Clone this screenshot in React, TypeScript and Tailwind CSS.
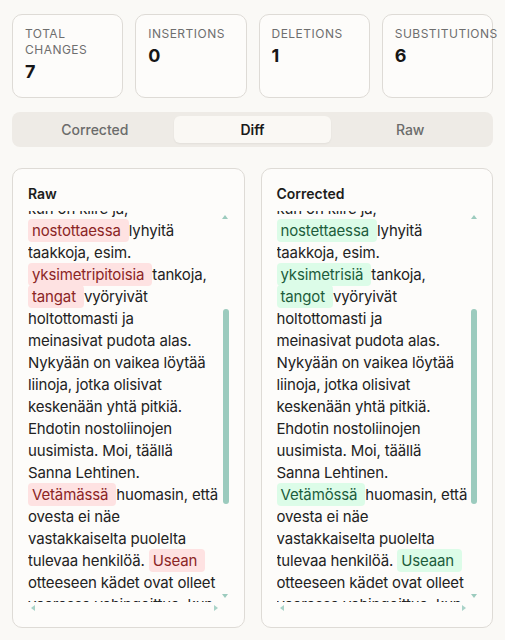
import React, { useLayoutEffect, useRef } from "react";

type Seg = [string, boolean?];
type Line = Seg[];

const before: Line[] = [
  [["Hei, olen Matti Virtanen ja"]],
  [["työskentelen varastossa."]],
  [["Huomasin eilen, että"]],
  [["nosturin nostoliinat ovat"]],
  [["kuluneet ja osittain"]],
  [["rispaantuneet. Niitä on"]],
  [["vaikea käyttää, etenkin"]],
  [["kun on kiire ja,"]],
];

const after: Line[] = [
  [["ovi on avattu toiselta"]],
  [["puolelta yllättäen."]],
  [["Ehdotan, että oveen"]],
  [["asennetaan ikkuna, jotta"]],
  [["vastaantulijat näkisivät"]],
  [["toisensa ajoissa."]],
];

const rawLines: Line[] = [
  ...before,
  [["nostottaessa ", true], ["lyhyitä"]],
  [["taakkoja, esim."]],
  [["yksimetripitoisia ", true], ["tankoja,"]],
  [["tangat ", true], ["vyöryivät"]],
  [["holtottomasti ja"]],
  [["meinasivat pudota alas."]],
  [["Nykyään on vaikea löytää"]],
  [["liinoja, jotka olisivat"]],
  [["keskenään yhtä pitkiä."]],
  [["Ehdotin nostoliinojen"]],
  [["uusimista. Moi, täällä"]],
  [["Sanna Lehtinen."]],
  [["Vetämässä ", true], ["huomasin, että"]],
  [["ovesta ei näe"]],
  [["vastakkaiselta puolelta"]],
  [["tulevaa henkilöä. "], ["Usean ", true]],
  [["otteeseen kädet ovat olleet"]],
  [["vaarassa vahingoittua, kun"]],
  ...after,
];

const corLines: Line[] = [
  ...before,
  [["nostettaessa ", true], ["lyhyitä"]],
  [["taakkoja, esim."]],
  [["yksimetrisiä ", true], ["tankoja,"]],
  [["tangot ", true], ["vyöryivät"]],
  [["holtottomasti ja"]],
  [["meinasivat pudota alas."]],
  [["Nykyään on vaikea löytää"]],
  [["liinoja, jotka olisivat"]],
  [["keskenään yhtä pitkiä."]],
  [["Ehdotin nostoliinojen"]],
  [["uusimista. Moi, täällä"]],
  [["Sanna Lehtinen."]],
  [["Vetämössä ", true], ["huomasin, että"]],
  [["ovesta ei näe"]],
  [["vastakkaiselta puolelta"]],
  [["tulevaa henkilöä. "], ["Useaan ", true]],
  [["otteeseen kädet ovat olleet"]],
  [["vaarassa vahingoittua, kun"]],
  ...after,
];

function Panel({ title, lines, kind }: { title: string; lines: Line[]; kind: "raw" | "cor" }) {
  const ref = useRef<HTMLDivElement>(null);
  useLayoutEffect(() => {
    if (ref.current) ref.current.scrollTop = before.length * 22 - 9;
  }, []);
  const hlCls =
    kind === "raw"
      ? "bg-[#fee2e2] text-[#8b2525] rounded px-1 py-[2px]"
      : "bg-[#dcfce8] text-[#1d5c3c] rounded px-1 py-[2px]";
  return (
    <div className="flex-1 min-w-0 rounded-[10px] border border-[#dedbd6] bg-[#fdfcfa] pl-[15px] pr-[14px] pt-[15px] pb-[14px] flex flex-col">
      <div className="text-sm leading-5 font-semibold text-[#1c1c1c] mb-[7px]">{title}</div>
      <div className="h-[402px] flex flex-col">
        <div className="flex-1 min-h-0 flex">
          <div
            ref={ref}
            className="flex-1 min-w-0 overflow-hidden text-[15px] leading-[22px] tracking-[-0.01em] text-[#222222]"
          >
            {lines.map((ln, i) => (
              <div key={i} className="whitespace-pre h-[22px]">
                {ln.map((s, j) =>
                  s[1] ? (
                    <span key={j} className={hlCls}>
                      {s[0]}
                    </span>
                  ) : (
                    <span key={j}>{s[0]}</span>
                  )
                )}
              </div>
            ))}
          </div>
          <div className="w-[11px] flex flex-col items-end pr-px">
            <div className="h-[12px] w-[7px] flex items-center justify-center">
              <div className="w-0 h-0 border-l-[3.5px] border-r-[3.5px] border-b-[4px] border-l-transparent border-r-transparent border-b-[#9ccbbe]" />
            </div>
            <div className="mt-[86px] h-[195px] w-[6px] rounded-full bg-[#9ccbbe]" />
            <div className="flex-1" />
            <div className="h-[12px] w-[7px] flex items-center justify-center">
              <div className="w-0 h-0 border-l-[3.5px] border-r-[3.5px] border-t-[4px] border-l-transparent border-r-transparent border-t-[#9ccbbe]" />
            </div>
          </div>
        </div>
        <div className="h-[11px] flex items-center">
          <div className="flex-1 flex items-center justify-between pl-[3px] pr-px">
            <div className="w-0 h-0 border-t-[3.5px] border-b-[3.5px] border-r-[4px] border-t-transparent border-b-transparent border-r-[#a9d3c8]" />
            <div className="w-0 h-0 border-t-[3.5px] border-b-[3.5px] border-l-[4px] border-t-transparent border-b-transparent border-l-[#a9d3c8]" />
          </div>
          <div className="w-[11px]" />
        </div>
      </div>
    </div>
  );
}

function Stat({ label, value, nowrap }: { label: string; value: string; nowrap?: boolean }) {
  return (
    <div className="rounded-[10px] border border-[#dedbd6] bg-[#fdfcfa] px-3 py-[11px] min-w-0">
      <div
        className={
          "text-xs leading-4 uppercase tracking-[0.04em] text-[#6e6e6e] " +
          (nowrap ? "whitespace-nowrap" : "whitespace-normal")
        }
      >
        {label}
      </div>
      <div className="text-lg leading-7 font-bold text-[#161616]">{value}</div>
    </div>
  );
}

export default function App() {
  return (
    <div
      className="min-h-[640px] bg-[#faf9f6] px-3 pt-[14px]"
      style={{ fontFamily: "Inter, 'Noto Sans', sans-serif" }}
    >
      <div className="grid grid-cols-4 gap-3">
        <Stat label="Total changes" value="7" />
        <Stat label="Insertions" value="0" />
        <Stat label="Deletions" value="1" />
        <Stat label="Substitutions" value="6" nowrap />
      </div>

      <div className="mt-[14px] grid grid-cols-3 rounded-lg bg-[#eeebe6] p-1">
        <div className="h-[27px] flex items-center justify-center text-sm font-medium text-[#6b6b6b]">Corrected</div>
        <div className="h-[27px] flex items-center justify-center text-sm font-semibold text-[#1a1a1a] bg-[#faf8f4] rounded-md shadow-[0_1px_2px_rgba(0,0,0,0.05)]">
          Diff
        </div>
        <div className="h-[27px] flex items-center justify-center text-sm font-medium text-[#6b6b6b]">Raw</div>
      </div>

      <div className="mt-[21px] flex gap-4">
        <Panel title="Raw" lines={rawLines} kind="raw" />
        <Panel title="Corrected" lines={corLines} kind="cor" />
      </div>
    </div>
  );
}
